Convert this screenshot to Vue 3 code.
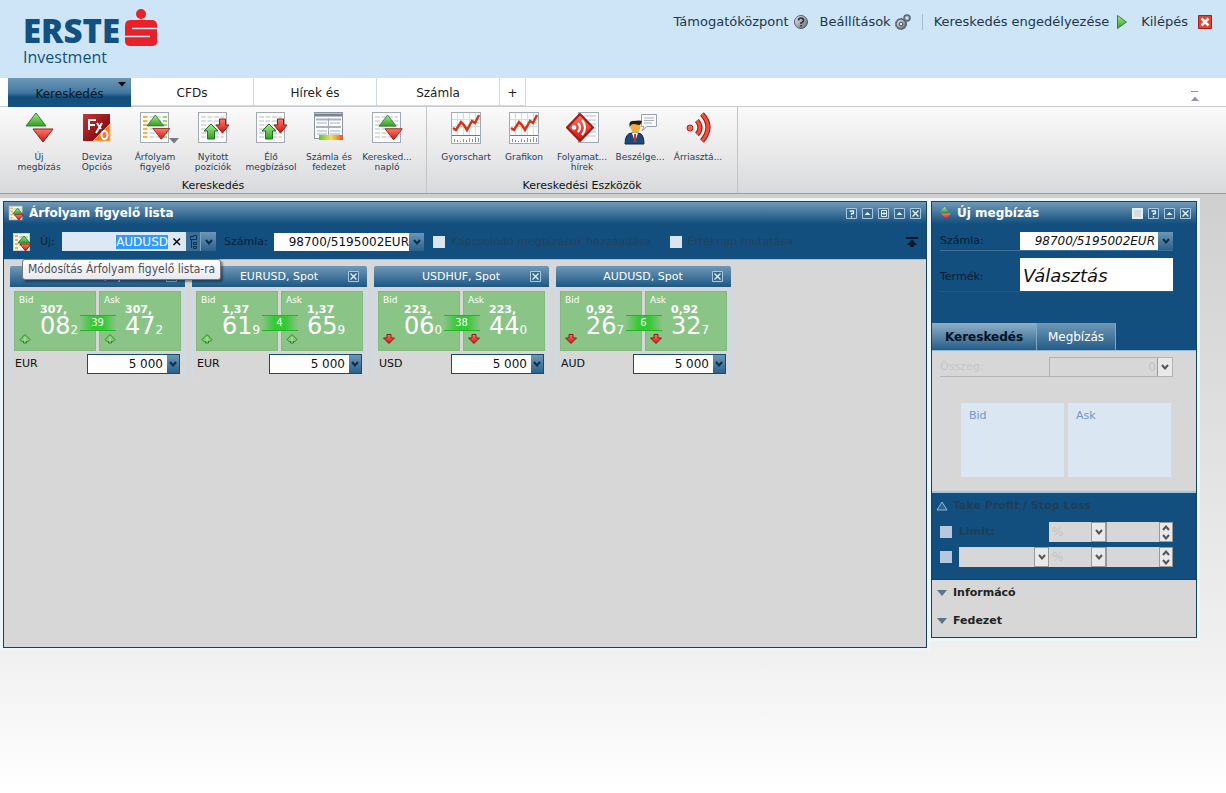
<script setup>
import { ref, onMounted } from 'vue'

const mainTabs = ['Kereskedés', 'CFDs', 'Hírek és', 'Számla']

const groups = [
  {
    title: 'Kereskedés',
    tools: [
      { icon: 'order', label: ['Új', 'megbízás'] },
      { icon: 'fx', label: ['Deviza', 'Opciós'] },
      { icon: 'watch', label: ['Árfolyam', 'figyelő'], menu: true },
      { icon: 'positions', label: ['Nyitott', 'pozíciók'] },
      { icon: 'positions', label: ['Élő', 'megbízásol'] },
      { icon: 'account', label: ['Számla és', 'fedezet'] },
      { icon: 'log', label: ['Keresked...', 'napló'] }
    ]
  },
  {
    title: 'Kereskedési Eszközök',
    tools: [
      { icon: 'chart', label: ['Gyorschart'] },
      { icon: 'chart', label: ['Grafikon'] },
      { icon: 'news', label: ['Folyamat...', 'hírek'] },
      { icon: 'chat', label: ['Beszélge...'] },
      { icon: 'alert', label: ['Árriasztá...'] }
    ]
  }
]

const tiles = [
  { name: 'EURHUF, Spot', ccy: 'EUR', dir: 'up', spread: '39', bid: ['307,', '08', '2'], ask: ['307,', '47', '2'] },
  { name: 'EURUSD, Spot', ccy: 'EUR', dir: 'up', spread: '4', bid: ['1,37', '61', '9'], ask: ['1,37', '65', '9'] },
  { name: 'USDHUF, Spot', ccy: 'USD', dir: 'down', spread: '38', bid: ['223,', '06', '0'], ask: ['223,', '44', '0'] },
  { name: 'AUDUSD, Spot', ccy: 'AUD', dir: 'down', spread: '6', bid: ['0,92', '26', '7'], ask: ['0,92', '32', '7'] }
]

const symbol = ref('AUDUSD')
const symbolInput = ref(null)
onMounted(() => {
  symbolInput.value.focus()
  symbolInput.value.select()
})
</script>

<template>
  <div class="page">
    <svg class="defs" width="0" height="0" aria-hidden="true">
      <defs>
        <linearGradient id="gGreen" x1="0" y1="0" x2="0" y2="1">
          <stop offset="0" stop-color="#a8eb8e" /><stop offset="1" stop-color="#2f9e28" />
        </linearGradient>
        <linearGradient id="gRed" x1="0" y1="0" x2="0" y2="1">
          <stop offset="0" stop-color="#ff7a66" /><stop offset="1" stop-color="#c51712" />
        </linearGradient>
        <linearGradient id="gMargin" x1="0" y1="0" x2="1" y2="0">
          <stop offset="0" stop-color="#57c934" /><stop offset="0.5" stop-color="#f3e04a" /><stop offset="1" stop-color="#e8532c" />
        </linearGradient>
        <linearGradient id="gFx" x1="0" y1="0" x2="1" y2="1">
          <stop offset="0" stop-color="#c4373a" /><stop offset="0.6" stop-color="#8f1416" />
        </linearGradient>
        <linearGradient id="gSteel" x1="0" y1="0" x2="1" y2="1">
          <stop offset="0" stop-color="#f2f4f7" /><stop offset="1" stop-color="#5b6270" />
        </linearGradient>
        <g id="sheet">
          <rect x="3.500" y="1.500" width="28" height="30" fill="#fdfdfe" stroke="#a3a9b4" />
          <path d="M6 6h23M6 10h23M6 14h23M6 18h23M6 22h23M6 26h23" stroke="#b9bec9" stroke-dasharray="5 1.500" fill="none" />
        </g>
        <g id="pair">
          <path d="M10 0 20 13H0Z" fill="url(#gGreen)" stroke="#2f7c2c" stroke-linejoin="round" />
          <path d="M7 16H27L17 29Z" fill="url(#gRed)" stroke="#8f1a17" stroke-linejoin="round" />
        </g>
      </defs>
      <symbol id="i-order" viewBox="0 0 36 34"><use href="#pair" x="5" y="2" /></symbol>
      <symbol id="i-fx" viewBox="0 0 36 34">
        <rect x="4" y="3" width="27" height="27" fill="url(#gFx)" />
        <path d="M31 13V30H14Z" fill="#ee7a22" stroke="#f7b46b" />
        <path d="M10 19V9h7M10 14h6M18 12l4 6M23 12l-6 10" stroke="#fff" stroke-width="2" fill="none" />
        <ellipse cx="25.500" cy="24" rx="3" ry="4" fill="none" stroke="#fff" stroke-width="2" />
      </symbol>
      <symbol id="i-watch" viewBox="0 0 36 34">
        <use href="#sheet" />
        <path d="M8 5v24" stroke="#f5b640" stroke-width="4" stroke-dasharray="2 2" />
        <path d="M28 5v24" stroke="#9bd36e" stroke-width="4" stroke-dasharray="2 2" />
        <use href="#pair" transform="translate(10 4) scale(.84)" />
      </symbol>
      <symbol id="i-log" viewBox="0 0 36 34">
        <use href="#sheet" />
        <use href="#pair" transform="translate(10 4) scale(.86)" />
      </symbol>
      <symbol id="i-positions" viewBox="0 0 36 34">
        <use href="#sheet" />
        <path d="M16 13 23 20H19.500V28H12.500V20H9Z" fill="url(#gGreen)" stroke="#22711f" />
        <path d="M24.500 8H30.500V14H34L27.500 22 21 14H24.500Z" fill="url(#gRed)" stroke="#971713" />
      </symbol>
      <symbol id="i-account" viewBox="0 0 36 34">
        <rect x="3.500" y="1.500" width="28" height="26" fill="#fdfdfe" stroke="#8b93a1" />
        <path d="M4 4h27" stroke="#7a8391" stroke-width="3" />
        <path d="M5 8.500h25M5 16h25" stroke="#a9b1bd" stroke-width="2" />
        <path d="M6 12h10M19 12h10M6 20h10M19 20h10M6 23h10M19 23h10M17.500 7v18" stroke="#a3abb8" />
        <rect x="8" y="24" width="24" height="5" fill="url(#gMargin)" />
      </symbol>
      <symbol id="i-chart" viewBox="0 0 36 34">
        <rect x="3.500" y="1.500" width="29" height="31" fill="#fff" stroke="#a3a9b4" />
        <path d="M9.500 2v22M15.500 2v22M21.500 2v22M27.500 2v22M4 8.500h28M4 15.500h28" stroke="#d5dde8" />
        <path d="M5 20 12 15 18 17 25 10 31 12" stroke="#f2bc86" fill="none" />
        <path d="M5 17 8 19 13 11 16 14 19 19 24 10 27 12 31 4" stroke="#d43519" stroke-width="2.500" fill="none" />
        <path d="M4 24.500h28" stroke="#6f7887" />
        <path d="M6.500 31v-3M9.500 31v-2M12.500 31v-1M15.500 31v-3M18.500 31v-2M21.500 31v-4M24.500 31v-3M27.500 31v-5M30.500 31v-4" stroke="#8690a0" />
      </symbol>
      <symbol id="i-news" viewBox="0 0 36 34">
        <rect x="14.500" y="1.500" width="20" height="30" fill="#fdfdfe" stroke="#a3a9b4" />
        <path d="M16 5h16M16 9h16M16 13h16M16 17h16M16 21h16M16 25h16" stroke="#b9bec9" />
        <path d="M16 3 29 16.500 16 30 3 16.500Z" fill="url(#gRed)" stroke="#a61613" stroke-width="2" stroke-linejoin="round" />
        <circle cx="10" cy="16.500" r="2.300" fill="#fff" />
        <path d="M14 12q4 4.500 0 9M18 9q6 7.500 0 15" stroke="#fff" stroke-width="2.200" fill="none" />
      </symbol>
      <symbol id="i-chat" viewBox="0 0 36 34">
        <path d="M19.500 3.500H34.500V15.500H25L20 20 22 15.500H19.500Z" fill="#f7f8fa" stroke="#98a0ac" />
        <path d="M22 7h10M22 9.500h10M22 12h8" stroke="#a9b0bb" />
        <path d="M3 33q0-11 7-11h6q6 0 6 11Z" fill="#1e4877" stroke="#102b4b" />
        <path d="M10 22h6l-3 9Z" fill="#fff" />
        <path d="M13 23v8" stroke="#c9302c" stroke-width="2" />
        <ellipse cx="13.500" cy="16" rx="5" ry="6" fill="#eeb13c" />
        <path d="M8 17q-2-6 2-7 9-1 10 0-1 4-3 4l-5-1q-4 0-4 4" fill="#2a1d12" />
      </symbol>
      <symbol id="i-alert" viewBox="0 0 36 34">
        <circle cx="10" cy="17" r="3" fill="#ef6a58" stroke="#b5201a" />
        <path d="M17 9.500q6 7.500 0 14M22 3q12 13 0 27" stroke="#9d1713" stroke-width="5" fill="none" />
        <path d="M17 9.500q6 7.500 0 14M22 3q12 13 0 27" stroke="#ee5140" stroke-width="3" fill="none" />
      </symbol>
      <symbol id="i-list" viewBox="0 0 20 20">
        <rect x="1.500" y="1.500" width="16" height="17" fill="#f5f7ea" stroke="#c7cdd6" />
        <path d="M4.500 3v15" stroke="#f2b44a" stroke-width="3" stroke-dasharray="2 2" />
        <path d="M7 5h9M7 9h9M7 13h9" stroke="#9fb29b" />
        <path d="M12 4 18 11H6Z" fill="url(#gGreen)" stroke="#2f7c2c" />
        <path d="M8 12H19L13.500 19Z" fill="url(#gRed)" stroke="#8f1a17" />
      </symbol>
      <symbol id="w-help" viewBox="0 0 11 11">
        <path d="M.5.5h10v10H.5Z" fill="#33688f" stroke="#a9c9e0" /><path d="M3.500 3h4v2.500h-2V7M5.500 8v1.500" stroke="#e6f1f9" stroke-width="1.300" fill="none" />
      </symbol>
      <symbol id="w-min" viewBox="0 0 11 11">
        <path d="M.5.5h10v10H.5Z" fill="#33688f" stroke="#a9c9e0" /><path d="M2.500 7 5.500 4 8.500 7Z" fill="#e6f1f9" />
      </symbol>
      <symbol id="w-plus" viewBox="0 0 11 11">
        <path d="M.5.5h10v10H.5Z" fill="#33688f" stroke="#a9c9e0" /><path d="M3.500 2.500h5v6h-5Z" fill="none" stroke="#e6f1f9" /><path d="M4 5.500h4M6 4v3" stroke="#e6f1f9" />
      </symbol>
      <symbol id="w-close" viewBox="0 0 11 11">
        <path d="M.5.5h10v10H.5Z" fill="#33688f" stroke="#a9c9e0" /><path d="M2.500 2.500 8.500 8.500M8.500 2.500 2.500 8.500" stroke="#e6f1f9" stroke-width="1.400" />
      </symbol>
      <symbol id="w-square" viewBox="0 0 11 11"><rect width="11" height="11" fill="#e4eef5" /><rect x="2" y="2" width="7" height="7" fill="#d3dde4" /></symbol>
      <symbol id="t-up" viewBox="0 0 12 12">
        <path d="M6 1.500 11 6.500 8.500 9 7.500 8V10H4.500V8L3.500 9 1 6.500Z" fill="#7fcf6e" stroke="#357f33" /><path d="M6 4V8" stroke="#b4e8a6" />
      </symbol>
      <symbol id="t-down" viewBox="0 0 12 12">
        <path d="M4 1.500H8V5H11.500L6 10.500.5 5H4Z" fill="url(#gRed)" stroke="#8a1a12" />
      </symbol>
      <symbol id="chev" viewBox="0 0 8 6"><path d="M1 1 4 4.500 7 1" fill="none" stroke="currentColor" stroke-width="2" /></symbol>
    </svg>

    <header class="top">
      <a class="logo" href="#" aria-label="Erste Investment">
        <span class="brand">
          <span class="word">ERSTE</span>
          <svg class="mark" viewBox="0 0 32 38" aria-hidden="true">
            <circle cx="16" cy="5" r="5" fill="#e8202a" />
            <path d="M5 11H28Q32 12 32 16V33Q32 37 27 37H5Q0 37 0 32V17Q0 11 5 11Z" fill="#e8202a" />
            <path d="M7 19.500H32M0 27.500H25" fill="none" stroke="#cde5f7" stroke-width="1.500" />
          </svg>
        </span>
        <span class="sub">Investment</span>
      </a>
      <nav class="links">
        <a href="#">Támogatóközpont
          <svg width="16" height="16" viewBox="0 0 16 16"><circle cx="8" cy="8" r="6.500" fill="url(#gSteel)" stroke="#525b68" /><path d="M5.500 6.500Q5.500 4 8 4t2.500 2.500Q10.500 8 8 9v1M8 11v1.500" stroke="#26303d" stroke-width="1.600" fill="none" /></svg>
        </a>
        <a href="#">Beállítások
          <svg width="16" height="16" viewBox="0 0 16 16"><circle cx="6" cy="10" r="5" fill="url(#gSteel)" stroke="#5b6473" stroke-width="1.500" /><circle cx="6" cy="10" r="5.500" fill="none" stroke="#5b6473" stroke-dasharray="2 1.500" /><circle cx="6" cy="10" r="1.800" fill="#dfe7f0" stroke="#4a5362" /><circle cx="12" cy="4" r="3" fill="#a9b1bd" stroke="#5b6473" stroke-width="1.500" /><circle cx="12" cy="4" r="1" fill="#eef3f8" /></svg>
        </a>
        <span class="bar"></span>
        <a href="#" class="enable">Kereskedés engedélyezése
          <svg width="12" height="16" viewBox="0 0 12 16"><path d="M1.500 1.500 10.500 8 1.500 14.500Z" fill="url(#gGreen)" stroke="#2b8a24" /></svg>
        </a>
        <a href="#" class="exit">Kilépés
          <svg width="14" height="14" viewBox="0 0 14 14"><path d="M.5.5h13v13H.5Z" fill="#e2432f" stroke="#a82218" /><path d="M3.500 3.500 10.500 10.500M10.500 3.500 3.500 10.500" stroke="#fff" stroke-width="2.500" /></svg>
        </a>
      </nav>
    </header>

    <nav class="tabs">
      <button v-for="(t, i) in mainTabs" :key="t" class="tab" :class="{ on: i === 0 }">
        {{ t }}
        <svg v-if="i === 0" class="tabmenu" width="8" height="5" viewBox="0 0 8 5"><path d="M0 0h8L4 4.500Z" fill="#000" /></svg>
      </button>
      <button class="tab add">+</button>
      <button class="fold" aria-label="Összecsukás">
        <svg width="8" height="10" viewBox="0 0 8 10"><path d="M0 .5h7" stroke="#8d929c" /><path d="M0 10h8L4 5.500Z" fill="#9297a3" /></svg>
      </button>
    </nav>

    <div class="ribbon">
      <section v-for="g in groups" :key="g.title" class="group">
        <div class="tools">
          <button v-for="t in g.tools" :key="t.label.join()" class="tool">
            <svg width="36" height="34"><use :href="'#i-' + t.icon" /></svg>
            <svg v-if="t.menu" class="toolmenu" width="10" height="6" viewBox="0 0 10 6"><path d="M0 0h10L5 5.500Z" fill="#74798a" /></svg>
            <span v-for="l in t.label" :key="l">{{ l }}</span>
          </button>
        </div>
        <div class="gtitle">{{ g.title }}</div>
      </section>
    </div>

    <main class="work">
      <section class="panel watch">
        <div class="phead">
          <svg width="16" height="16"><use href="#i-list" /></svg>
          <h2>Árfolyam figyelő lista</h2>
          <button v-for="(w, i) in ['help', 'min', 'plus', 'min', 'close']" :key="i" class="win" :aria-label="w"><svg width="11" height="11"><use :href="'#w-' + w" /></svg></button>
        </div>
        <div class="toolbar">
          <svg width="20" height="20"><use href="#i-list" /></svg>
          <label class="lnew" for="sym">Új:</label>
          <div class="symbox">
            <input id="sym" ref="symbolInput" v-model="symbol" type="text" spellcheck="false" />
            <button class="clear" aria-label="Törlés"><svg width="10" height="10" viewBox="0 0 10 10"><path d="M1.500 1.500 8 8M8 1.500 1.500 8" stroke="#111" stroke-width="1.600" /></svg></button>
            <button class="tree" aria-label="Lista"><svg width="9" height="14" viewBox="0 0 9 14"><path d="M1.500 1.500h3v-1h3v4h-6ZM2.500 5v8M4.500 7.500h3v2h-3ZM4.500 11.500h3v2h-3Z" fill="none" stroke="#0d3354" /></svg></button>
            <button class="arrow" aria-label="Lenyitás"><svg width="8" height="6"><use href="#chev" /></svg></button>
            <div class="tip" role="tooltip">Módosítás Árfolyam figyelő lista-ra</div>
          </div>
          <label class="lacc" for="acc">Számla:</label>
          <div class="combo acc">
            <select id="acc"><option>98700/5195002EUR</option></select>
            <span class="arrow"><svg width="8" height="6"><use href="#chev" /></svg></span>
          </div>
          <label class="check"><input type="checkbox" />Kapcsolódó megbízások hozzáadása</label>
          <label class="check second"><input type="checkbox" />Értéknap mutatása</label>
          <button class="totop" aria-label="Felülre"><svg width="12" height="10" viewBox="0 0 12 10"><path d="M0 1h12" stroke="#05182c" stroke-width="2" /><path d="M6 2.500 11 8H1Z" fill="#05182c" /><path d="M4 9H8" stroke="#05182c" stroke-width="2" /></svg></button>
        </div>
        <div class="quotes">
          <article v-for="(q, i) in tiles" :key="q.name" class="tile">
            <div class="thead"><span>{{ q.name }}</span><button class="win" aria-label="Bezárás"><svg width="11" height="11"><use href="#w-close" /></svg></button></div>
            <div class="prices">
              <button v-for="s in ['bid', 'ask']" :key="s" class="price">
                <span class="side">{{ s === 'bid' ? 'Bid' : 'Ask' }}</span>
                <b>{{ q[s][0] }}</b>
                <span class="big">{{ q[s][1] }}<small>{{ q[s][2] }}</small></span>
                <svg class="dir" width="12" height="12"><use :href="'#t-' + q.dir" /></svg>
              </button>
              <span class="spread">{{ q.spread }}</span>
            </div>
            <div class="amount">
              <label :for="'amt' + i">{{ q.ccy }}</label>
              <div class="combo">
                <select :id="'amt' + i"><option>5 000</option></select>
                <span class="arrow"><svg width="8" height="6"><use href="#chev" /></svg></span>
              </div>
            </div>
          </article>
        </div>
      </section>

      <section class="panel order">
        <div class="phead">
          <svg width="12" height="12" viewBox="0 0 12 12"><path d="M5.500 0 10 5.500H0Z" fill="url(#gGreen)" /><path d="M2 6.500H12L7 12Z" fill="url(#gRed)" /></svg>
          <h2>Új megbízás</h2>
          <button v-for="w in ['square', 'help', 'min', 'close']" :key="w" class="win" :aria-label="w"><svg width="11" height="11"><use :href="'#w-' + w" /></svg></button>
        </div>
        <div class="form">
          <div class="frow">
            <label for="oacc">Számla:</label>
            <div class="combo it">
              <select id="oacc"><option>98700/5195002EUR</option></select>
              <span class="arrow"><svg width="8" height="6"><use href="#chev" /></svg></span>
            </div>
          </div>
          <div class="frow product">
            <label for="prod">Termék:</label>
            <input id="prod" type="text" value="Választás" />
          </div>
        </div>
        <div class="otabs">
          <button class="on">Kereskedés</button>
          <button>Megbízás</button>
        </div>
        <div class="obody">
          <div class="sum">
            <label for="sum">Összeg:</label>
            <div class="combo off">
              <select id="sum" disabled><option>0</option></select>
              <span class="arrow"><svg width="8" height="6"><use href="#chev" /></svg></span>
            </div>
          </div>
          <div class="ba"><button disabled>Bid</button><button disabled>Ask</button></div>
        </div>
        <div class="tpsl">
          <h3><svg width="12" height="10" viewBox="0 0 12 10"><path d="M6 1 11 9H1Z" fill="#2f6690" stroke="#8fb4cf" /></svg>Take Profit / Stop Loss</h3>
          <div class="lrow">
            <input id="lim" type="checkbox" disabled />
            <label for="lim">Limit:</label>
            <div class="combo off left"><select disabled aria-label="Egység"><option>%</option></select><span class="arrow"><svg width="8" height="6"><use href="#chev" /></svg></span></div>
            <div class="spin"><input type="text" disabled aria-label="Limit érték" /><span><svg width="8" height="6" class="flip"><use href="#chev" /></svg><svg width="8" height="6"><use href="#chev" /></svg></span></div>
          </div>
          <div class="lrow">
            <input type="checkbox" disabled aria-label="Stop" />
            <div class="combo off left"><select disabled aria-label="Stop típus"><option></option></select><span class="arrow"><svg width="8" height="6"><use href="#chev" /></svg></span></div>
            <div class="combo off left"><select disabled aria-label="Stop egység"><option>%</option></select><span class="arrow"><svg width="8" height="6"><use href="#chev" /></svg></span></div>
            <div class="spin"><input type="text" disabled aria-label="Stop érték" /><span><svg width="8" height="6" class="flip"><use href="#chev" /></svg><svg width="8" height="6"><use href="#chev" /></svg></span></div>
          </div>
        </div>
        <div class="more">
          <h3 v-for="m in ['Informácó', 'Fedezet']" :key="m"><svg width="10" height="6" viewBox="0 0 10 6"><path d="M0 0h10L5 6Z" fill="#5b748d" /></svg>{{ m }}</h3>
        </div>
      </section>
    </main>
  </div>
</template>

<style>
body { margin: 0; }
</style>

<style scoped>
* { box-sizing: border-box; }
.page { min-height: 100vh; display: flex; flex-direction: column; font: 11px/14px "DejaVu Sans", Verdana, sans-serif; color: #111; }
button, input, select { font: inherit; color: inherit; margin: 0; padding: 0; border: 0; border-radius: 0; background: none; outline: none; }
svg { display: block; flex: none; }
.defs { position: absolute; }
h2, h3 { margin: 0; }
a { color: inherit; text-decoration: none; }

.top { display: flex; justify-content: space-between; align-items: flex-start; height: 78px; padding: 9px 14px 0 23px; background: #cde5f7; }
.logo { color: #11507f; display: flex; flex-direction: column; }
.brand { display: flex; gap: 6px; height: 38px; align-items: flex-end; }
.word { width: 96px; font: 800 33px/32px "Open Sans", "Noto Sans", sans-serif; }
.mark { width: 32px; height: 38px; }
.sub { font: 500 16px/20px "Open Sans", sans-serif; }
.links { display: flex; align-items: center; gap: 11px; font-size: 13px; line-height: 16px; color: #22364a; padding-top: 5px; }
.links a { display: flex; align-items: center; gap: 4px; }
.links .enable { gap: 7px; }
.links .exit { gap: 10px; margin-left: 2px; }
.bar { width: 1px; height: 16px; background: #a9bccb; }

.tabs { display: flex; height: 29px; padding-left: 8px; background: #fff; border-bottom: 1px solid #c9cbce; }
.tab { position: relative; width: 123px; height: 28px; padding-top: 3px; font-size: 12px; border-right: 1px solid #cbdbe6; border-bottom: 1px solid #cbdbe6; color: #222; }
.tab.on { height: 29px; padding-top: 2px; border: 0; background: linear-gradient(#6d98b8, #44789f 50%, #124f7e 65%, #17527f); color: #07182a; }
.tab.add { width: 26px; }
.tabmenu { position: absolute; right: 5px; top: 4px; }
.fold { margin: 8px 27px 0 auto; width: 8px; }

.ribbon { display: flex; height: 87px; background: linear-gradient(#fafafa, #ececed 45%, #d8d9db); border-bottom: 1px solid #9a9c9f; }
.group { border-right: 1px solid #c4c5c8; padding: 4px 10px 0; }
.tools { display: flex; height: 68px; }
.tool { position: relative; display: flex; flex-direction: column; align-items: center; justify-content: flex-start; width: 58px; font-size: 9px; line-height: 10px; color: #1f405e; white-space: nowrap; }
.tool > svg:first-child { margin-bottom: 7px; }
.tool .toolmenu { position: absolute; left: 43px; top: 27px; }
.gtitle { text-align: center; }

.work { flex: 1; display: flex; align-items: flex-start; gap: 4px; padding: 7px 29px 144px 3px; background: linear-gradient(#cfcfcf, #f0f0f0 76%, #fff); }
.panel { border: 1px solid #174363; background: #d7d7d7; box-shadow: 0 0 0 3px #eef5f9; }
.watch { flex: 1; min-width: 0; }
.order { width: 266px; }
.phead { display: flex; align-items: center; gap: 5px; height: 22px; padding: 0 5px 0 4px; background: linear-gradient(#7199b7, #124f7e); color: #fff; }
.phead h2 { flex: 1; font-size: 12px; line-height: 16px; }
.order .phead { padding-left: 7px; }
.order .phead h2 { padding-left: 1px; }
.win { width: 11px; height: 11px; flex: none; }

.toolbar { display: flex; align-items: center; height: 36px; padding: 0 8px; background: #124f7e; border-bottom: 1px solid #9cc3de; color: #071c33; }
.lnew { margin-left: 8px; width: 22px; }
.symbox { position: relative; display: flex; width: 154px; height: 19px; background: #dce9f5; }
.symbox input { flex: 1; min-width: 0; text-align: right; font-size: 12px; color: #111; }
.symbox input::selection { background: #3399ff; color: #fff; }
.clear { width: 18px; padding-left: 4px; }
.tree { width: 14px; padding-left: 3px; background: #3a6d95; }
.tip { position: absolute; left: -40px; top: 27px; z-index: 5; padding: 1px 5px; border: 1px solid #777; border-radius: 3px; background: linear-gradient(#fff, #e6e9f2); color: #4f4f4f; font: 12px/17px "DejaVu Sans Condensed", "DejaVu Sans", sans-serif; white-space: nowrap; box-shadow: 2px 2px 2px rgba(0, 0, 0, .4); }
.arrow { display: flex; align-items: center; justify-content: center; width: 15px; background: linear-gradient(#6c97b7, #2a618b); color: #0d2e4b; pointer-events: none; }
.symbox .arrow { border-left: 1px solid #7fa3bd; width: 16px; }
.lacc { margin-left: 8px; width: 50px; }
.combo { display: flex; height: 18px; background: #fff; color: #111; font-size: 12px; }
.combo select { flex: 1; min-width: 0; appearance: none; text-align: right; text-align-last: right; opacity: 1; }
.acc { width: 150px; }
.check { display: flex; align-items: center; gap: 6px; margin-left: 9px; color: #24425b; }
.check.second { margin-left: 18px; }
input[type=checkbox] { appearance: none; width: 12px; height: 12px; background: #d9e6f1; }
.totop { margin-left: auto; width: 12px; }

.quotes { display: flex; flex-wrap: wrap; align-items: flex-start; gap: 7px; padding: 6px; min-height: 387px; }
.tile { width: 175px; border: 1px solid #cbdcea; border-top: 0; padding-bottom: 5px; }
.thead { display: flex; align-items: center; height: 21px; margin: 0 -1px; padding: 0 8px; background: linear-gradient(#7099b8, #1c5784); color: #fff; border-radius: 2px 2px 0 0; }
.thead span { flex: 1; text-align: center; padding-left: 10px; }
.prices { position: relative; display: grid; grid-template-columns: 1fr 1fr; gap: 3px; margin: 4px 3px 3px; }
.price { position: relative; display: flex; flex-direction: column; justify-content: flex-start; height: 60px; padding: 2px 0 0 25px; background: #8bc487; border: 1px solid #86b882; color: #fff; text-align: left; }
.side { font-size: 9px; line-height: 12px; margin-left: -21px; }
.price b { font-size: 11px; line-height: 8px; }
.big { font-size: 24px; line-height: 24px; }
.big small { font-size: 12px; }
.dir { position: absolute; left: 4px; bottom: 5px; }
.spread { position: absolute; left: 50%; top: 24px; width: 36px; margin-left: -18px; height: 16px; border: solid #22b722; border-width: 1px 0; background: linear-gradient(90deg, #8bc487, #35c935 35%, #35c935 65%, #8bc487); color: #fff; font-size: 10px; line-height: 14px; text-align: center; }
.amount { display: flex; align-items: center; justify-content: space-between; padding: 0 4px; }
.amount .combo { width: 93px; height: 20px; border: 1px solid #1a4a70; }
.amount .arrow { width: 12px; }
.amount select { padding-right: 4px; }

.form { background: #124f7e; padding: 7px 23px 0 8px; height: 99px; color: #071c33; }
.frow { display: grid; grid-template-columns: 80px 1fr; align-items: center; height: 20px; border-bottom: 1px solid #3d729a; }
.it { font-style: italic; }
.it select { padding-right: 3px; }
.frow.product { height: 34px; margin-top: 7px; border-color: #1d5a88; }
.product label { padding-top: 5px; }
.product input { height: 33px; min-width: 0; width: 100%; background: #fff; color: #111; font: italic 18px/24px "DejaVu Sans", sans-serif; padding: 2px 0 0 3px; }
.otabs { display: flex; height: 28px; background: #124f7e; border-bottom: 1px solid #8fb9d6; font-size: 12px; }
.otabs button { height: 27px; width: 80px; color: #fff; border-right: 1px solid #7fa8c6; border-left: 1px solid #7fa8c6; background: linear-gradient(#6f98b7, #235c88); }
.otabs .on { width: 104px; font-weight: bold; color: #04101d; border: 0; background: linear-gradient(#8fb0c8, #245d89); }
.obody { padding: 6px 23px 14px 8px; border-bottom: 2px solid #9fc6df; }
.sum { display: grid; grid-template-columns: 109px 1fr; align-items: center; height: 20px; border-bottom: 1px solid #b5b5b5; color: #c6c6c6; }
.combo.off { background: #d7d7d7; color: #c4c4c4; height: 20px; }
.off .arrow { width: 15px; background: #e9e9e9; border: 1px solid #999; color: #555; }
.off.left select { text-align-last: left; padding-left: 3px; }
.sum .combo { border: 1px solid #b3b3b3; }
.sum select { padding-right: 1px; }
.sum .arrow { border-width: 0 0 0 1px; }
.ba { display: grid; grid-template-columns: 1fr 1fr; gap: 4px; margin: 26px 2px 0 21px; }
.ba button { display: flex; align-items: flex-start; height: 74px; padding: 6px 8px; background: #dae6f2; color: #7596c4; }
.tpsl { background: #124f7e; padding: 6px 23px 12px 8px; border-bottom: 1px solid #174363; color: #1f3e57; }
h3 { display: flex; align-items: center; font-size: 11px; line-height: 14px; }
.tpsl h3 { gap: 5px; margin-left: -4px; }
.lrow { display: grid; grid-template-columns: 19px 90px 57px minmax(0, 1fr); align-items: center; height: 20px; margin-top: 5px; }
h3 + .lrow { margin-top: 9px; }
.lrow label { font-weight: bold; }
.lrow input[type=checkbox] { background: #b7c8dc; }
.spin { display: flex; height: 20px; background: #d7d7d7; border-left: 1px solid #999; }
.spin input { flex: 1; min-width: 0; width: 100%; }
.spin span { flex: none; display: flex; flex-direction: column; align-items: center; justify-content: space-around; width: 14px; background: #e9e9e9; border: 1px solid #999; color: #555; }
.flip { transform: rotate(180deg); }
.more { padding: 6px 5px 9px; display: grid; gap: 14px; }
.more h3 { gap: 6px; color: #222; }
</style>
